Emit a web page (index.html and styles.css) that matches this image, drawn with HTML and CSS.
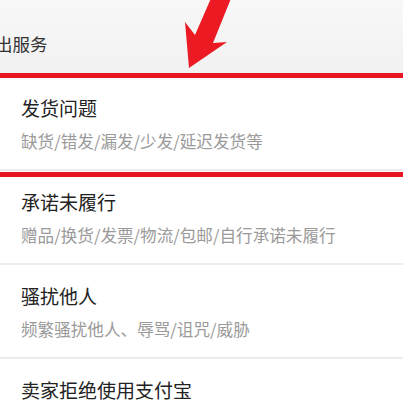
FILE: index.html
```html
<!DOCTYPE html>
<html lang="zh-CN">
<head>
  <meta charset="UTF-8" />
  <title>服务</title>
  <link rel="stylesheet" href="styles.css">
</head>
<body>
  <div class="page">
    <!-- HEADER -->
    <header class="head">
      <span class="head-title">出服务</span>
    </header>

    <!-- LISTA -->
    <ul class="list">
      <li class="item">
        <div class="item-title">发货问题</div>
        <div class="item-sub">缺货/错发/漏发/少发/延迟发货等</div>
      </li>
      <li class="item">
        <div class="item-title">承诺未履行</div>
        <div class="item-sub">赠品/换货/发票/物流/包邮/自行承诺未履行</div>
      </li>
      <li class="item">
        <div class="item-title">骚扰他人</div>
        <div class="item-sub">频繁骚扰他人、辱骂/诅咒/威胁</div>
      </li>
      <li class="item">
        <div class="item-title">卖家拒绝使用支付宝</div>
      </li>
    </ul>

    <!-- ANNOTAZIONI -->
    <div class="mark mark-top"></div>
    <div class="mark mark-bottom"></div>
    <svg class="arrow" width="60" height="75" viewBox="180 -5 60 75">
      <polygon fill="#ec1b23" points="189,68 185,22 195,35 212,-4 232,-4 213,43 227,42" />
    </svg>
  </div>
</body>
</html>
```

FILE: styles.css
```css
:root {
  --red: #e8161e;
  --ink: #222;
  --muted: #9a9a9a;
  --line: #ececec;
}
* {
  box-sizing: border-box;
  margin: 0;
  padding: 0;
}
body {
  background: #fff;
  font-family: "Noto Sans CJK SC", "Noto Sans", sans-serif;
  color: var(--ink);
  overflow: hidden;
}
.page {
  position: relative;
  width: 403px;
}

/* HEADER */
.head {
  height: 77px;
  background: linear-gradient(#f8f8f8, #f1f1f1);
  padding-top: 32px;
}
.head-title {
  display: block;
  margin-left: -5px;
  font-size: 17.5px;
  line-height: 24px;
  color: #333;
}

/* LIST */
.list {
  list-style: none;
}
.item {
  height: 94px;
  padding: 19px 0 0 21px;
  border-bottom: 2px solid var(--line);
}
.item-title {
  font-size: 19px;
  line-height: 24px;
}
.item-sub {
  margin-top: 10px;
  font-size: 16.6px;
  line-height: 22px;
  color: var(--muted);
}

/* ANNOTATIONS */
.mark {
  position: absolute;
  left: 0;
  width: 100%;
  height: 5px;
  background: var(--red);
}
.mark-top {
  top: 73px;
}
.mark-bottom {
  top: 172px;
}
.arrow {
  position: absolute;
  left: 180px;
  top: -5px;
}
```
